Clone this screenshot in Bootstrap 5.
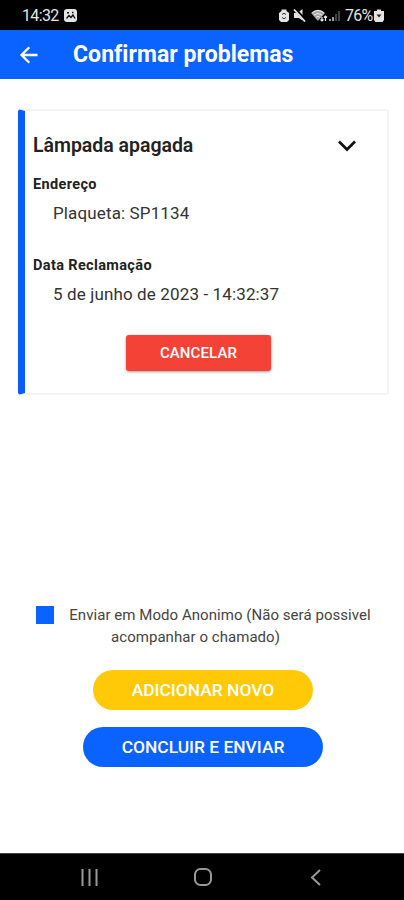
<!DOCTYPE html>
<html lang="pt-BR">
<head>
<meta charset="utf-8">
<meta name="viewport" content="width=device-width, initial-scale=1">
<title>Confirmar problemas</title>
<link href="https://cdn.jsdelivr.net/npm/bootstrap@5.3.0/dist/css/bootstrap.min.css" rel="stylesheet">
<style>
body{font-family:Roboto,"Liberation Sans",sans-serif;color:#222;background:#fff;height:900px;overflow:hidden}
svg{display:block;flex:none}
.status{height:30px;background:#000;color:#e4e4e4;font-size:16px;line-height:30px;padding:0 20px 0 22px}
.clock{letter-spacing:-.65px;width:42px;padding-top:1px}
.level{letter-spacing:-.7px;width:29px;padding-top:1px}
.appbar{height:49px;background:#0a62ff;color:#fff;padding-left:19px}
.appbar h1{font-size:23px;font-weight:700;margin-left:34px;padding-top:1px;letter-spacing:.05px}
.issue{margin:30px 15px 0 18px;height:286px;border:2px solid #f4f4f4;border-left:7px solid #0a5cff;border-radius:3px;padding:23px 0 0 8px}
.issue h2{font-size:19.5px;line-height:24px;font-weight:600;letter-spacing:-.02px}
.chevron{margin-right:29px}
.issue dl{margin:18px 0 0}
.issue dt{font-size:14.5px;line-height:18px;font-weight:700;letter-spacing:.36px;margin-bottom:8px}
.issue dd{font-size:17px;line-height:22px;padding-left:20px;margin-bottom:33px;color:#333;letter-spacing:.13px}
.issue dd:last-child{margin-bottom:30px}
.cancel{width:145px;height:36px;margin-left:93px;background:#f44336;font-size:15px;letter-spacing:.12px;border-radius:3px;line-height:36px;box-shadow:0 1px 3px #0006}
.anon{margin-top:209px;font-size:15px;line-height:22px;color:#444;padding-left:36px}
.box{width:18px;height:18px;background:#0a62ff;margin-top:2px}
.anon label{width:304px;margin-left:14px;letter-spacing:.05px}
.second{padding-right:49px}
.pill{height:40px;line-height:40px;font-size:17.4px;font-weight:500}
.add{width:220px;background:#ffc907;margin-top:22px}
.send{width:240px;background:#0a62ff;margin-top:17px}
.pills{padding-left:2px}
.sysnav{height:47px;background:#000;border-top:1px solid #444;padding-left:81px}
.home{margin-left:96px}
.back{margin-left:98px}
</style>
</head>
<body class="d-flex flex-column">
<div class="status d-flex align-items-center">
  <span class="clock">14:32</span>
  <svg width="13" height="13" viewBox="0 0 13 13"><rect width="13" height="13" rx="3" fill="#e4e4e4"/><path d="M2.500 9.500 5 6.500 7 8.500 9 6l2 3.500M3 3.700h2M8 3.500h1.500" fill="none" stroke="#111" stroke-width="1.400"/></svg>
  <div class="ms-auto d-flex align-items-center">
    <svg width="10" height="13" viewBox="0 0 10 13"><path d="M2.500 2V.5h5V2L10 4v7l-2 2H2L0 11V4z" fill="#e4e4e4"/><path d="M3 5.500Q5 3 7 5.500M3 8.500Q5 11 7 8.500" fill="none" stroke="#333"/></svg>
    <svg class="ms-1" width="14" height="13" viewBox="0 0 14 13"><path d="M1 4h3.500L9.500 0v11.500L6 9H1z" fill="#e4e4e4"/><path d="M2 0 13 12" stroke="#000" stroke-width="3"/><path d="M1 0.500 12 12.500" stroke="#e4e4e4" stroke-width="1.800"/></svg>
    <svg class="ms-1" width="17" height="13" viewBox="0 0 17 13"><path d="M0 4Q7-2.500 14 4L7 12z" fill="#a5a5a5"/><path d="M1 4Q7-1 13 4M3 6Q7 3 11 6M5 8.500Q7 6 9 8.500" fill="none" stroke="#eee"/><path d="M11 8v4M9.500 10.500 11 12l1.500-1.500M14.500 12V7M13 8.500 14.500 7 16 8.500" fill="none" stroke="#eee" stroke-width="1.200"/></svg>
    <svg width="13" height="13" viewBox="0 0 13 13"><path d="M2 12v-2M5 12V8" stroke="#ccc" stroke-width="1.500"/><path d="M8 12V5M11 12V2" stroke="#555" stroke-width="1.600"/></svg>
    <span class="level ms-1">76%</span>
    <svg width="10" height="13" viewBox="0 0 10 13"><path d="M3 2V.5h4V2h3v9L8.500 13h-7L0 11V2z" fill="#e4e4e4"/><path d="M2.500 5.500 5 8.500l2.500-3z" fill="#222"/></svg>
  </div>
</div>
<header class="appbar d-flex align-items-center">
  <svg width="20" height="20" viewBox="0 0 20 20" fill="none" stroke="#fff" stroke-width="2.300"><path d="M18.500 10H3M10.300 2.200 2.500 10l7.800 7.800"/></svg>
  <h1 class="mb-0">Confirmar problemas</h1>
</header>
<main class="flex-grow-1">
  <section class="issue">
    <div class="d-flex justify-content-between align-items-center">
      <h2 class="mb-0">Lâmpada apagada</h2>
      <svg class="chevron" width="22" height="14" viewBox="0 0 22 14"><path d="m3 2.500 8 8 8-8" fill="none" stroke="#111" stroke-width="2.700"/></svg>
    </div>
    <dl>
      <dt>Endereço</dt><dd>Plaqueta: SP1134</dd>
      <dt>Data Reclamação</dt><dd>5 de junho de 2023 - 14:32:37</dd>
    </dl>
    <button class="cancel btn d-block p-0 border-0 text-white fw-medium">CANCELAR</button>
  </section>
  <div class="anon d-flex">
    <span class="box"></span>
    <label class="text-center">Enviar em Modo Anonimo (Não será possivel <span class="second d-block">acompanhar o chamado)</span></label>
  </div>
  <div class="pills">
    <button class="pill add btn d-block mx-auto rounded-pill border-0 p-0 text-white">ADICIONAR NOVO</button>
    <button class="pill send btn d-block mx-auto rounded-pill border-0 p-0 text-white">CONCLUIR E ENVIAR</button>
  </div>
</main>
<nav class="sysnav d-flex align-items-center">
  <svg width="17" height="17" viewBox="0 0 17 17" stroke="#999" stroke-width="2"><path d="M1.500 0v17M8.500 0v17M15.500 0v17"/></svg>
  <svg class="home" width="18" height="18" viewBox="0 0 18 18"><rect x="1" y="1" width="16" height="16" rx="5.500" fill="none" stroke="#999" stroke-width="2"/></svg>
  <svg class="back" width="11" height="17" viewBox="0 0 11 17"><path d="M10 1 2 8.500l8 7.500" fill="none" stroke="#999" stroke-width="2"/></svg>
</nav>
<script src="https://cdn.jsdelivr.net/npm/bootstrap@5.3.0/dist/js/bootstrap.bundle.min.js"></script>
</body>
</html>
